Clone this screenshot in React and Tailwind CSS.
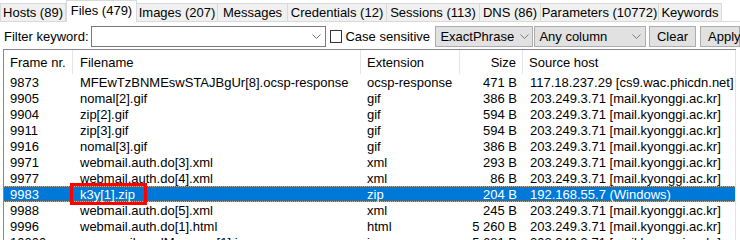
import React from "react";

const tabs = [
  { label: "Hosts (89)", w: 66 },
  { label: "Files (479)", w: 71, active: true },
  { label: "Images (207)", w: 82 },
  { label: "Messages", w: 71 },
  { label: "Credentials (12)", w: 100 },
  { label: "Sessions (113)", w: 94 },
  { label: "DNS (86)", w: 62 },
  { label: "Parameters (10772)", w: 119 },
  { label: "Keywords", w: 64 },
];

const host = "203.249.3.71 [mail.kyonggi.ac.kr]";
const rows = [
  ["9873", "MFEwTzBNMEswSTAJBgUr[8].ocsp-response", "ocsp-response", "471 B", "117.18.237.29 [cs9.wac.phicdn.net]"],
  ["9905", "nomal[2].gif", "gif", "386 B", host],
  ["9904", "zip[2].gif", "gif", "594 B", host],
  ["9911", "zip[3].gif", "gif", "594 B", host],
  ["9916", "nomal[3].gif", "gif", "386 B", host],
  ["9971", "webmail.auth.do[3].xml", "xml", "293 B", host],
  ["9977", "webmail.auth.do[4].xml", "xml", "86 B", host],
  ["9983", "k3y[1].zip", "zip", "204 B", "192.168.55.7 (Windows)", true],
  ["9988", "webmail.auth.do[5].xml", "xml", "245 B", host],
  ["9996", "webmail.auth.do[1].html", "html", "5 260 B", host],
  ["10000", "ems_mailsendMessage[1].js", "js", "5 681 B", host],
];

function Chevron() {
  return (
    <svg width="9" height="6" viewBox="0 0 9 6" className="shrink-0">
      <path d="M0.5 0.5 L4.5 4.5 L8.5 0.5" fill="none" stroke="#7a7a7a" strokeWidth="1" />
    </svg>
  );
}

export default function App() {
  return (
    <div
      className="w-[740px] h-[240px] overflow-hidden bg-white text-[13px] text-black leading-none"
      style={{ fontFamily: '"Liberation Sans", Arial, sans-serif' }}
    >
      {/* Tabs */}
      <div className="flex items-end h-[22px] pl-[1px] bg-white relative">
        <div className="absolute left-0 right-0 bottom-0 h-px bg-[#d9d9d9]" />
        {tabs.map((t) =>
          t.active ? (
            <div
              key={t.label}
              style={{ width: t.w }}
              className="relative z-10 h-[22px] bg-white border border-b-0 border-[#d9d9d9] flex items-center justify-center pb-[2px]"
            >
              {t.label}
            </div>
          ) : (
            <div
              key={t.label}
              style={{ width: t.w }}
              className="h-[19px] bg-[#f0f0f0] border border-[#d9d9d9] -ml-px first:ml-0 flex items-center justify-center"
            >
              {t.label}
            </div>
          )
        )}
      </div>

      {/* Filter row */}
      <div className="flex items-center h-[26px] pl-[4px] pt-[3px]">
        <span className="w-[87px] shrink-0">Filter keyword:</span>
        <div className="w-[240px] h-[21px] border border-[#7a7a7a] bg-white flex items-center justify-end pr-[4px]">
          <Chevron />
        </div>
        <div className="ml-[4px] w-[13px] h-[13px] border border-[#333] bg-white" />
        <span className="ml-[3px] w-[92px]">Case sensitive</span>
        <div className="w-[100px] h-[21px] border border-[#adadad] bg-[#e1e1e1] flex items-center justify-between pl-[4px] pr-[3px]">
          <span>ExactPhrase</span>
          <Chevron />
        </div>
        <div className="ml-[1px] w-[114px] h-[21px] border border-[#adadad] bg-[#e1e1e1] flex items-center justify-between pl-[4px] pr-[4px]">
          <span>Any column</span>
          <Chevron />
        </div>
        <div className="ml-[3px] w-[48px] h-[21px] border border-[#adadad] bg-[#e1e1e1] flex items-center justify-center">
          Clear
        </div>
        <div className="ml-[4px] w-[40px] h-[21px] border border-[#adadad] bg-[#e1e1e1] flex items-center pl-[7px] shrink-0">
          Apply
        </div>
      </div>

      {/* Table */}
      <div className="mt-[1px] ml-[3px] w-[733px] h-[200px] border-l border-t border-[#828790] relative">
        <div className="absolute right-0 top-0 bottom-0 w-px bg-[#e3e3e3]" />
        {/* header */}
        <div className="flex h-[24px] items-center">
          <div className="w-[69px] h-full flex items-center pl-[6px] border-r border-[#e5e5e5]">Frame nr.</div>
          <div className="w-[288px] h-full flex items-center pl-[7px] border-r border-[#e5e5e5]">Filename</div>
          <div className="w-[99px] h-full flex items-center pl-[6px] border-r border-[#e5e5e5]">Extension</div>
          <div className="w-[63px] h-full flex items-center justify-end pr-[6px] border-r border-[#e5e5e5]">Size</div>
          <div className="flex-1 h-full flex items-center pl-[6px]">Source host</div>
        </div>
        {rows.map((r) => {
          const sel = r[5];
          return (
            <div
              key={r[0]}
              className={
                "flex h-[16px] items-center w-[731px] " +
                (sel ? "bg-[#0078d7] text-white border-y border-dotted border-[#f3a54a]" : "")
              }
            >
              <div className="w-[69px] pl-[6px] shrink-0">{r[0]}</div>
              <div className="w-[288px] pl-[7px] shrink-0 relative">
                {sel && (
                  <div className="absolute left-[-3px] top-[-5px] w-[77px] h-[22px] border-[3px] border-[#ff0000]" />
                )}
                {r[1]}
              </div>
              <div className="w-[99px] pl-[6px] shrink-0">{r[2]}</div>
              <div className="w-[63px] pr-[6px] text-right shrink-0">{r[3]}</div>
              <div className="flex-1 pl-[7px] whitespace-nowrap">{r[4]}</div>
            </div>
          );
        })}
      </div>
    </div>
  );
}
